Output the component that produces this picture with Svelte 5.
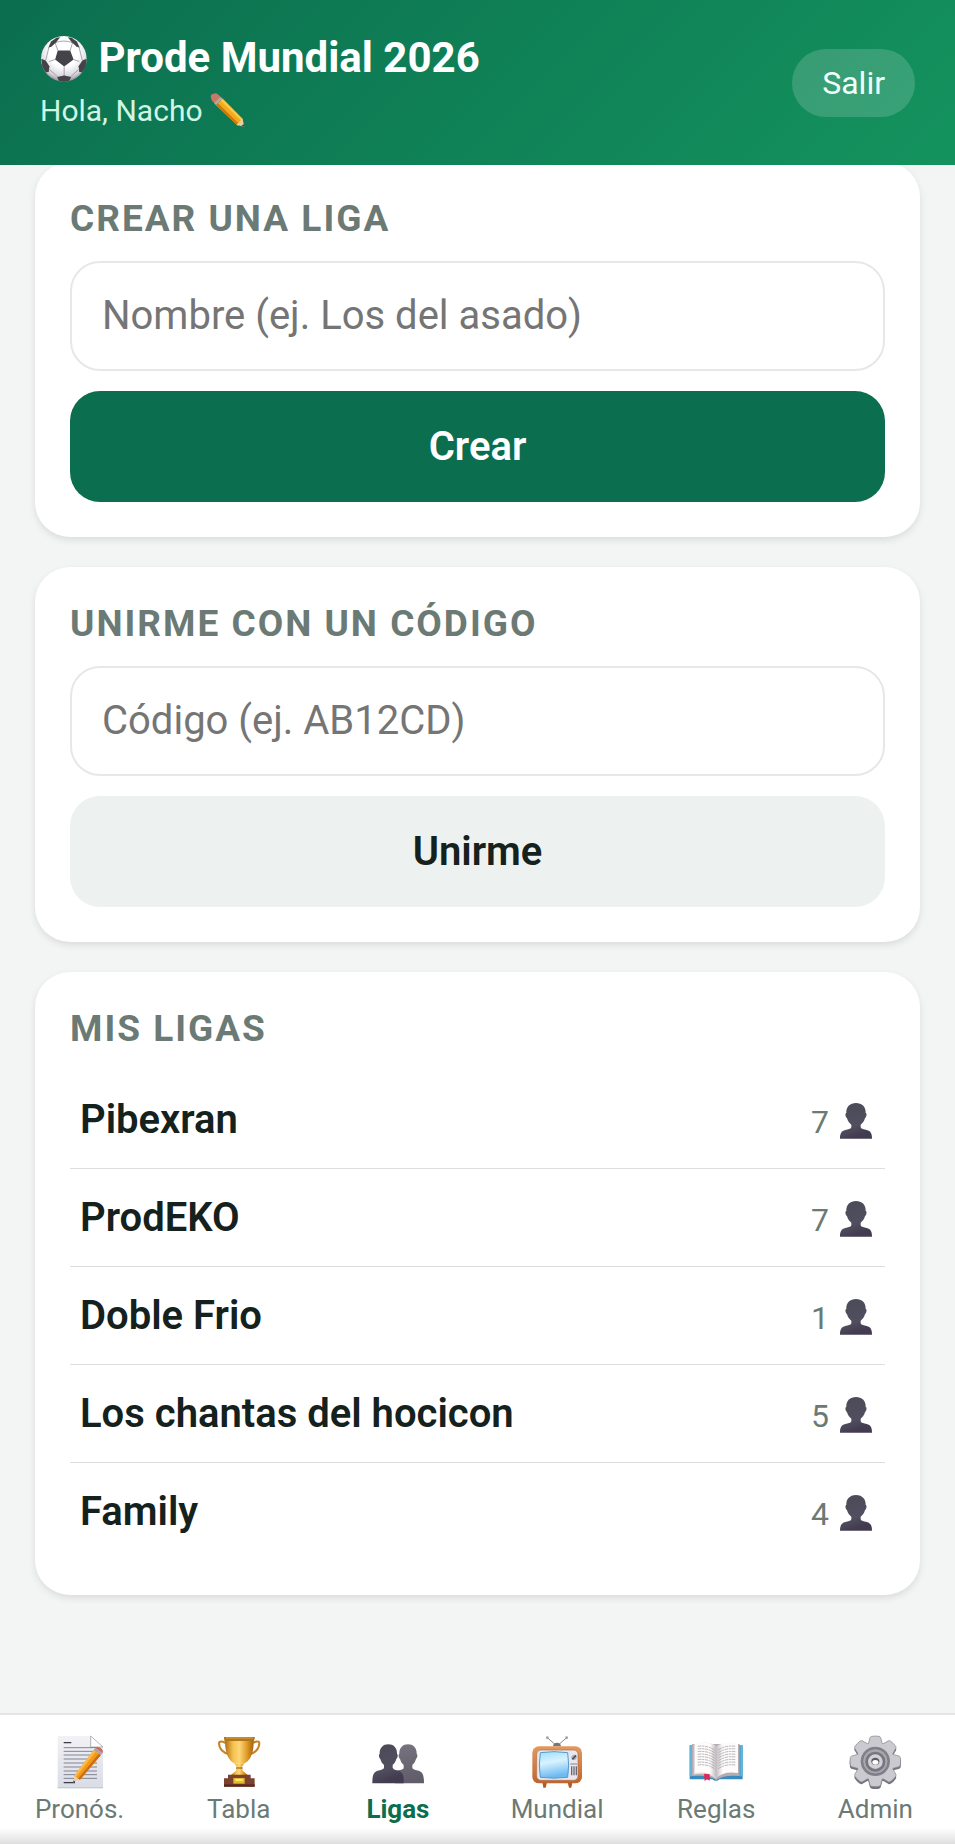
<script>
  let leagueName = $state("");
  let code = $state("");
  let tab = $state("ligas");

  let leagues = $state([
    { name: "Pibexran", members: 7 },
    { name: "ProdEKO", members: 7 },
    { name: "Doble Frio", members: 1 },
    { name: "Los chantas del hocicon", members: 5 },
    { name: "Family", members: 4 },
  ]);

  const tabs = [
    { id: "pronos", label: "Pronós." },
    { id: "tabla", label: "Tabla" },
    { id: "ligas", label: "Ligas" },
    { id: "mundial", label: "Mundial" },
    { id: "reglas", label: "Reglas" },
    { id: "admin", label: "Admin" },
  ];

  const teeth = [0, 45, 90, 135, 180, 225, 270, 315];
  const paperLines = [38, 49, 60, 72, 84, 96, 108, 119, 130];
  const bookLines = [34, 42, 50, 58, 66, 74, 82, 90];

  const createLeague = (e) => {
    e.preventDefault();
    if (leagueName !== "") {
      leagues.push({ name: leagueName, members: 1 });
      leagueName = "";
    }
  };

  const joinLeague = (e) => {
    e.preventDefault();
    code = "";
  };
</script>

<!-- shared gradients -->
<svg class="defs" aria-hidden="true">
  <defs>
    <radialGradient id="ball" cx="0.5" cy="0.35" r="0.65">
      <stop offset="0.5" stop-color="#fff" />
      <stop offset="0.85" stop-color="#d5d3da" />
      <stop offset="1" stop-color="#8d8b93" />
    </radialGradient>
    <linearGradient id="person" x1="0" y1="0" x2="0.3" y2="1">
      <stop offset="0" stop-color="#4b4a57" />
      <stop offset="0.7" stop-color="#514f5f" />
      <stop offset="1" stop-color="#433b50" />
    </linearGradient>
    <linearGradient id="person-back" x1="0" y1="0" x2="0.2" y2="1">
      <stop offset="0" stop-color="#77757f" />
      <stop offset="1" stop-color="#615d6b" />
    </linearGradient>
    <linearGradient id="paper" x1="0" y1="0" x2="0" y2="1">
      <stop offset="0" stop-color="#f2f2f5" />
      <stop offset="1" stop-color="#dadce6" />
    </linearGradient>
    <linearGradient id="gold" x1="0" y1="0" x2="1" y2="0">
      <stop offset="0" stop-color="#a8650b" />
      <stop offset="0.3" stop-color="#f6c24f" />
      <stop offset="0.5" stop-color="#fbd878" />
      <stop offset="0.75" stop-color="#e09a26" />
      <stop offset="1" stop-color="#9c5a0c" />
    </linearGradient>
    <linearGradient id="screen" x1="0" y1="0" x2="0.2" y2="1">
      <stop offset="0" stop-color="#9edcfb" />
      <stop offset="0.45" stop-color="#d9f3ff" />
      <stop offset="1" stop-color="#6db9f2" />
    </linearGradient>
    <linearGradient id="wood" x1="0" y1="0" x2="0" y2="1">
      <stop offset="0" stop-color="#e39a5c" />
      <stop offset="1" stop-color="#c0642c" />
    </linearGradient>
    <linearGradient id="page-left" x1="0" y1="0" x2="1" y2="0">
      <stop offset="0.7" stop-color="#fdfcfb" />
      <stop offset="1" stop-color="#bdb9bd" />
    </linearGradient>
    <linearGradient id="page-right" x1="0" y1="0" x2="1" y2="0">
      <stop offset="0" stop-color="#c4c0c4" />
      <stop offset="0.3" stop-color="#fdfcfb" />
    </linearGradient>
  </defs>
</svg>

<div class="app">
  <header>
    <div>
      <h1>
        <svg class="ball" viewBox="0 0 143 143" aria-hidden="true">
          <g transform="translate(3 3)">
            <circle cx="68" cy="68" r="68" fill="url(#ball)" />
            <g fill="none" stroke="#96949c" stroke-width="2.5">
              <path d="M50 43 L42 20 M87 43 L94 20 M97 70 L114 76 M42 70 L24 76 M69 91 V120" />
              <path d="M42 20 Q68 10 94 20 M24 32 L14 72 M113 32 L123 72 M25 100 L50 122 M112 100 L88 122" />
            </g>
            <g fill="#44434a">
              <path d="M50 43 H87 L97 70 L69 91 L42 70 Z" />
              <path d="M22 34 L30 16 L46 5 L57 4 L46 18 L31 32 Z" />
              <path d="M115 34 L107 16 L91 5 L80 4 L91 18 L106 32 Z" />
              <path d="M1 68 L14 73 L25 90 L23 107 L14 108 L4 92 Z" />
              <path d="M136 68 L123 73 L112 90 L114 107 L123 108 L133 92 Z" />
              <path d="M48 122 L69 118 L90 122 L84 133 L68 136 L53 133 Z" />
            </g>
          </g>
        </svg>
        Prode Mundial 2026
      </h1>
      <button class="user">
        Hola, Nacho
        <svg class="pencil" viewBox="0 0 105 105" aria-hidden="true">
          <path d="M2 12 Q1 5 8 3 L17 1 Q22 1 26 6 L33 13 L13 31 L6 23 Z" fill="#c9796a" />
          <path d="M12 30 L32 11 L38 17 L18 37 Z" fill="#b7a79a" />
          <path d="M18 37 L38 17 L98 78 L84 99 Z" fill="#f5a91c" />
          <path d="M18 37 L24 31 L88 94 L84 98 Z" fill="#c97a0c" />
          <path d="M32 23 L38 17 L98 78 L94 84 Z" fill="#fdc748" />
          <path d="M98 78 L103 102 L80 95 Q82 90 86 90 Q87 85 91 84 Q92 79 98 78 Z" fill="#e9cfa5" />
          <path d="M101 93 L103 102 L94 99 Z" fill="#4b4244" />
        </svg>
      </button>
    </div>
    <button class="logout">Salir</button>
  </header>

  <main>
    <form class="card" onsubmit={createLeague}>
      <h2><label for="league-name">CREAR UNA LIGA</label></h2>
      <input
        id="league-name"
        type="text"
        placeholder="Nombre (ej. Los del asado)"
        bind:value={leagueName}
      />
      <button class="btn primary">Crear</button>
    </form>

    <form class="card" onsubmit={joinLeague}>
      <h2><label for="league-code">UNIRME CON UN CÓDIGO</label></h2>
      <input
        id="league-code"
        type="text"
        placeholder="Código (ej. AB12CD)"
        bind:value={code}
      />
      <button class="btn">Unirme</button>
    </form>

    <section class="card">
      <h2>MIS LIGAS</h2>
      <ul>
        {#each leagues as league}
          <li>
            <a href="#ligas">
              <span class="name">{league.name}</span>
              <span class="count">
                {league.members}
                <svg class="person" viewBox="0 0 114 108" aria-hidden="true">
                  <path
                    d="M57 0 C74 0 87 11 86 30 C91 31 88 43 84 46 C81 56 76 61 71 65 V73 C73 79 81 79 89 81 C101 84 105 92 105 107 H9 C9 92 13 84 25 81 C33 79 41 79 43 73 V65 C38 61 33 56 30 46 C26 43 23 31 28 30 C27 11 40 0 57 0 Z"
                    fill="url(#person)"
                  />
                </svg>
              </span>
            </a>
          </li>
        {/each}
      </ul>
    </section>
  </main>

  <nav>
    {#each tabs as t}
      <a href="#{t.id}" class:active={tab === t.id} onclick={() => (tab = t.id)}>
        <svg viewBox="0 0 162 162" aria-hidden="true">
          {#if t.id === "pronos"}
            <path d="M14 3 H114 L150 36 V160 H14 Z" fill="url(#paper)" />
            <path d="M14 157 H150 V160 H14 Z" fill="#c3c5cf" />
            <path d="M113 3 V36 H150 Z" fill="#fff" stroke="#8f919d" stroke-width="2" />
            <path d="M32 23 H55 M32 143 H66" stroke="#3a3b48" stroke-width="4" />
            {#each paperLines as y}
              <path d="M32 {y} H132" stroke="#6e6f7e" stroke-width="2.5" />
            {/each}
            <path d="M60 144 L65 121 L77 133 Z" fill="#ecd0a8" />
            <path d="M60 144 L62 136 L67 141 Z" fill="#453d40" />
            <path d="M64 122 L122 45 L144 60 L81 134 Z" fill="#f49a1a" />
            <path d="M64 122 L122 45 L129 49 L69 126 Z" fill="#fdbb45" />
            <path d="M75 131 L137 56 L144 60 L81 134 Z" fill="#cd6c12" />
            <path d="M122 45 L127 39 L149 54 L144 60 Z" fill="#a7a4ac" />
            <path d="M127 39 Q133 33 143 39 Q152 46 149 54 Z" fill="#cb6a58" />
          {:else if t.id === "tabla"}
            <path
              d="M40 25 C36 18 22 17 21 24 C21 42 35 55 52 58 M124 25 C128 18 142 17 142 24 C142 42 128 55 112 58"
              fill="none"
              stroke="#c58223"
              stroke-width="6"
            />
            <path
              d="M36 6 H128 L125 21 C125 61 111 79 96 86 H68 C52 78 40 60 39 21 Z"
              fill="url(#gold)"
            />
            <path d="M36 6 H128 L126 18 H38 Z" fill="#b57619" />
            <path d="M42 9 H122" stroke="#ebbc50" stroke-width="2" />
            <path d="M68 86 H96 L90 96 L92 107 L107 120 H57 L72 107 L74 96 Z" fill="url(#gold)" />
            <path d="M72 99 H92" stroke="#8f5411" stroke-width="3" />
            <path d="M48 119 H116 V130 H128 V155 H36 V130 H48 Z" fill="#7b4230" />
            <path d="M36 148 H128 V155 H36 Z" fill="#5a2a20" />
            <path d="M64 129 H98 V146 H64 Z" fill="#e3bb2c" />
            <path d="M70 132 H92 V138 H70 Z" fill="#ffe668" />
          {:else if t.id === "ligas"}
            <path
              d="M111 28 C127 28 138 39 137 57 C141 58 139 68 135 72 C133 80 129 86 124 90 V98 C126 104 135 104 143 107 C156 111 159 122 159 145 H72 V108 C88 104 98 104 98 98 V90 C93 86 89 80 87 72 C83 68 81 58 85 57 C84 39 95 28 111 28 Z"
              fill="url(#person-back)"
            />
            <path
              d="M52 28 C68 28 79 39 78 57 C82 58 80 68 76 72 C74 80 70 86 65 90 V98 C67 104 75 104 82 107 C96 111 99 122 98 145 H4 C4 122 7 111 20 107 C28 104 37 104 39 98 V90 C34 86 30 80 28 72 C24 68 22 58 26 57 C25 39 36 28 52 28 Z"
              fill="url(#person)"
            />
          {:else if t.id === "mundial"}
            <path d="M76 29 L52 8 M86 29 L110 8" stroke="#85858c" stroke-width="3" />
            <circle cx="52" cy="8" r="4" fill="#9d9da4" />
            <circle cx="110" cy="8" r="4" fill="#9d9da4" />
            <path d="M69 34 Q70 23 81 23 Q92 23 93 34 Z" fill="#75757e" />
            <path d="M37 142 H51 L47 158 H40 Z M113 142 H127 L124 158 H117 Z" fill="#b95721" />
            <rect x="7" y="34" width="149" height="111" rx="20" fill="url(#wood)" />
            <rect x="20" y="45" width="124" height="91" rx="13" fill="#e8e7ed" stroke="#ad714d" stroke-width="2" />
            <path d="M31 53 Q72 47 113 53 Q119 90 113 127 Q72 132 31 127 Q25 90 31 53 Z" fill="url(#screen)" stroke="#579aca" stroke-width="3" />
            <circle cx="132" cy="67" r="8" fill="#b5b3bf" />
            <path d="M127 73 L138 61" stroke="#53515d" stroke-width="5" />
            <path d="M121 87 H142" stroke="#85828f" stroke-width="3" />
            <path d="M125 94 V121 M132 94 V121 M139 94 V121" stroke="#6b6874" stroke-width="4" />
          {:else if t.id === "reglas"}
            <path d="M2 31 H161 V133 H92 Q81 142 70 133 H2 Z" fill="#388bbd" />
            <path d="M2 31 H9 V124 H2 Z M154 31 H161 V124 H154 Z" fill="#5cb8dc" />
            <path d="M9 27 H152 V123 Q104 119 82 135 Q59 119 9 123 Z" fill="#b5abb2" />
            <path d="M14 28 Q57 15 82 34 V132 Q59 112 14 119 Z" fill="#e1dbdd" />
            <path d="M18 23 Q60 17 82 34 V129 Q60 107 18 114 Z" fill="url(#page-left)" />
            <path d="M147 23 Q104 17 82 34 V129 Q104 107 147 114 Z" fill="url(#page-right)" />
            {#each bookLines as y}
              <path
                d="M26 {y} Q54 {y - 4} 76 {y + 11} M88 {y + 11} Q110 {y - 4} 139 {y}"
                fill="none"
                stroke="#96939a"
                stroke-width="2"
                stroke-dasharray="11 2 6 2"
              />
            {/each}
            <path d="M45 116 L62 118 V137 L54 133 L47 138 Z" fill="#df2857" />
          {:else}
            <g fill="#74737b" transform="translate(0 6)">
              {#each teeth as angle}
                <path d="M60 30 L66 7 Q67 4 71 3 Q82 1 93 3 Q97 4 98 7 L104 30 Z" transform="rotate({angle} 82 79)" />
              {/each}
              <circle cx="82" cy="79" r="57" />
            </g>
            <g fill="#cbcad0" stroke="#85848c" stroke-width="2">
              {#each teeth as angle}
                <path d="M60 30 L66 8 Q67 5 71 4 Q82 2 93 4 Q97 5 98 8 L104 30 Z" transform="rotate({angle} 82 79)" />
              {/each}
            </g>
            <circle cx="82" cy="79" r="56" fill="#cbcad0" />
            <circle cx="82" cy="79" r="44" fill="#83828a" />
            <circle cx="82" cy="79" r="38" fill="#a8a7ae" stroke="#6e6d76" stroke-width="2" />
            <circle cx="82" cy="80" r="30" fill="#777680" />
            <circle cx="82" cy="80" r="22" fill="#d2d1d7" />
            <ellipse cx="82" cy="79" rx="12" ry="11" fill="#5d5c65" />
            <ellipse cx="82" cy="82" rx="9" ry="7" fill="#fff" />
          {/if}
        </svg>
        <span>{t.label}</span>
      </a>
    {/each}
  </nav>
</div>

<style>
  :global(body) {
    background-color: #f3f5f4;
  }

  .defs {
    position: absolute;
    width: 0;
    height: 0;
  }

  .app {
    display: flex;
    flex-direction: column;
    min-height: 100vh;
    color: #14211d;
    font-family: Roboto, "Liberation Sans", sans-serif;
  }

  button,
  input {
    box-sizing: border-box;
    border: 0;
    font-family: inherit;
  }
  button {
    cursor: pointer;
  }
  a {
    color: inherit;
    text-decoration: none;
  }

  header {
    position: sticky;
    top: 0;
    z-index: 2;
    display: flex;
    align-items: center;
    justify-content: space-between;
    padding: 34px 40px;
    background: linear-gradient(135deg, #0b6e4f, #14935e);
    color: #fff;
  }
  h1 {
    margin: 0 0 8px;
    font-size: 42px;
    font-weight: 700;
    line-height: 48px;
  }
  .ball {
    width: 48px;
    height: 48px;
    vertical-align: -11px;
  }
  .user {
    display: block;
    padding: 0;
    background: none;
    color: #cff5e4;
    font-size: 30px;
    line-height: 40px;
  }
  .pencil {
    width: 35px;
    height: 35px;
    vertical-align: -7px;
  }
  .logout {
    padding: 15px 30px;
    border-radius: 34px;
    background-color: rgba(255, 255, 255, 0.16);
    color: #f0fffa;
    font-size: 32px;
    line-height: 38px;
  }

  main {
    display: flex;
    flex-direction: column;
    gap: 30px;
    /* first card slides under the header */
    margin: -3px 35px 30px;
  }
  .card {
    padding: 35px;
    border-radius: 35px;
    background-color: #fff;
    box-shadow: 0 3px 7px rgba(0, 0, 0, 0.1);
  }
  h2 {
    margin: 0 0 20px;
    color: #6b7a75;
    font-size: 37px;
    font-weight: 700;
    letter-spacing: 2px;
    line-height: 44px;
  }

  input {
    display: block;
    width: 100%;
    margin-bottom: 20px;
    padding: 30px;
    border: 2px solid #e6e8e7;
    border-radius: 30px;
    background-color: #fff;
    color: #14211d;
    font-size: 40px;
    line-height: 46px;
  }
  input::placeholder {
    color: #757575;
  }
  .btn {
    display: block;
    width: 100%;
    padding: 32px;
    border-radius: 30px;
    background-color: #edf1f0;
    color: #14211d;
    font-size: 40px;
    font-weight: 600;
    line-height: 47px;
  }
  .primary {
    background-color: #0b6e4f;
    color: #fff;
  }

  ul {
    margin: 0;
    padding: 0;
    list-style: none;
  }
  li + li {
    border-top: 1px solid #dcdfde;
  }
  li a {
    display: flex;
    align-items: baseline;
    justify-content: space-between;
    padding: 25px 10px;
  }
  .name {
    font-size: 40px;
    font-weight: 600;
    line-height: 47px;
  }
  .count {
    color: #6b7a75;
    font-size: 32px;
    line-height: 38px;
  }
  .person {
    width: 38px;
    height: 36px;
    vertical-align: -6px;
  }

  nav {
    position: sticky;
    bottom: 0;
    display: grid;
    grid-template-columns: repeat(6, 1fr);
    margin-top: auto;
    border-top: 2px solid #e3e6e5;
    background: linear-gradient(to top, #dedede, #fff 16px);
  }
  nav a {
    display: flex;
    flex-direction: column;
    align-items: center;
    gap: 5px;
    padding: 20px 0;
    color: #6b7a75;
    font-size: 26px;
    line-height: 30px;
  }
  nav svg {
    width: 54px;
    height: 54px;
  }
  nav .active {
    color: #0b6e4f;
    font-weight: 700;
  }
</style>
